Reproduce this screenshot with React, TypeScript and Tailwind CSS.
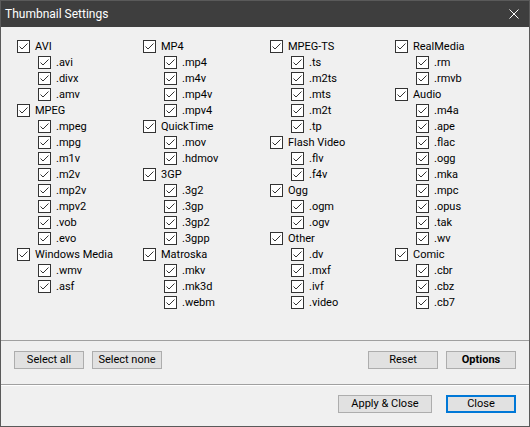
import React from "react";

type Group = { name: string; items: string[] };

const columns: Group[][] = [
  [
    { name: "AVI", items: [".avi", ".divx", ".amv"] },
    { name: "MPEG", items: [".mpeg", ".mpg", ".m1v", ".m2v", ".mp2v", ".mpv2", ".vob", ".evo"] },
    { name: "Windows Media", items: [".wmv", ".asf"] },
  ],
  [
    { name: "MP4", items: [".mp4", ".m4v", ".mp4v", ".mpv4"] },
    { name: "QuickTime", items: [".mov", ".hdmov"] },
    { name: "3GP", items: [".3g2", ".3gp", ".3gp2", ".3gpp"] },
    { name: "Matroska", items: [".mkv", ".mk3d", ".webm"] },
  ],
  [
    { name: "MPEG-TS", items: [".ts", ".m2ts", ".mts", ".m2t", ".tp"] },
    { name: "Flash Video", items: [".flv", ".f4v"] },
    { name: "Ogg", items: [".ogm", ".ogv"] },
    { name: "Other", items: [".dv", ".mxf", ".ivf", ".video"] },
  ],
  [
    { name: "RealMedia", items: [".rm", ".rmvb"] },
    { name: "Audio", items: [".m4a", ".ape", ".flac", ".ogg", ".mka", ".mpc", ".opus", ".tak", ".wv"] },
    { name: "Comic", items: [".cbr", ".cbz", ".cb7"] },
  ],
];

function Box() {
  return (
    <svg width="13" height="13" viewBox="0 0 13 13" className="shrink-0">
      <rect x="0.5" y="0.5" width="12" height="12" fill="#ffffff" stroke="#333333" />
      <polyline points="2.5,6.5 5,9 10.5,3.5" fill="none" stroke="#333333" strokeWidth="1" />
    </svg>
  );
}

function Row({ label, indent }: { label: string; indent?: boolean }) {
  return (
    <div className={`flex h-[16px] items-center gap-[5px] ${indent ? "pl-[21px]" : ""}`}>
      <Box />
      <span className="leading-none whitespace-nowrap">{label}</span>
    </div>
  );
}

function Btn({ children, w, bold, focus }: { children: React.ReactNode; w: string; bold?: boolean; focus?: boolean }) {
  return (
    <div
      className={`${w} h-[18px] flex items-center justify-center bg-[#e1e1e1] text-black ${
        focus ? "border-2 border-[#0078d7]" : "border border-[#adadad]"
      } ${bold ? "font-bold" : ""}`}
    >
      {children}
    </div>
  );
}

export default function App() {
  return (
    <div
      className="w-[530px] h-[427px] border border-[#5a5a5a] bg-[#f0f0f0] flex flex-col text-[11px] text-black"
      style={{ fontFamily: "Roboto, 'Liberation Sans', sans-serif" }}
    >
      <div className="h-[26px] bg-[#3e3e3e] flex items-center justify-between pl-[4px] pr-[10px] text-white text-[12px]">
        <span>Thumbnail Settings</span>
        <svg width="10" height="10" viewBox="0 0 10 10">
          <path d="M0.5 0.5 L9.5 9.5 M9.5 0.5 L0.5 9.5" stroke="#ffffff" strokeWidth="1" />
        </svg>
      </div>
      <div className="h-[313px] pt-[11px] pl-[16px] grid grid-cols-[126px_127px_125px_1fr] items-start">
        {columns.map((col, ci) => (
          <div key={ci} className="flex flex-col">
            {col.map((g) => (
              <React.Fragment key={g.name}>
                <Row label={g.name} />
                {g.items.map((it) => (
                  <Row key={it} label={it} indent />
                ))}
              </React.Fragment>
            ))}
          </div>
        ))}
      </div>
      <div className="h-px bg-[#a0a0a0]" />
      <div className="h-[43px] pt-[10px] px-[13px] flex items-start justify-between">
        <div className="flex gap-[8px]">
          <Btn w="w-[70px]">Select all</Btn>
          <Btn w="w-[70px]">Select none</Btn>
        </div>
        <div className="flex gap-[8px]">
          <Btn w="w-[70px]">Reset</Btn>
          <Btn w="w-[70px]" bold>Options</Btn>
        </div>
      </div>
      <div className="h-px bg-[#a0a0a0]" />
      <div className="h-px bg-white" />
      <div className="flex-1 pt-[9px] px-[13px] flex items-start justify-end gap-[14px]">
        <Btn w="w-[94px]">Apply &amp; Close</Btn>
        <Btn w="w-[70px]" focus>Close</Btn>
      </div>
    </div>
  );
}
